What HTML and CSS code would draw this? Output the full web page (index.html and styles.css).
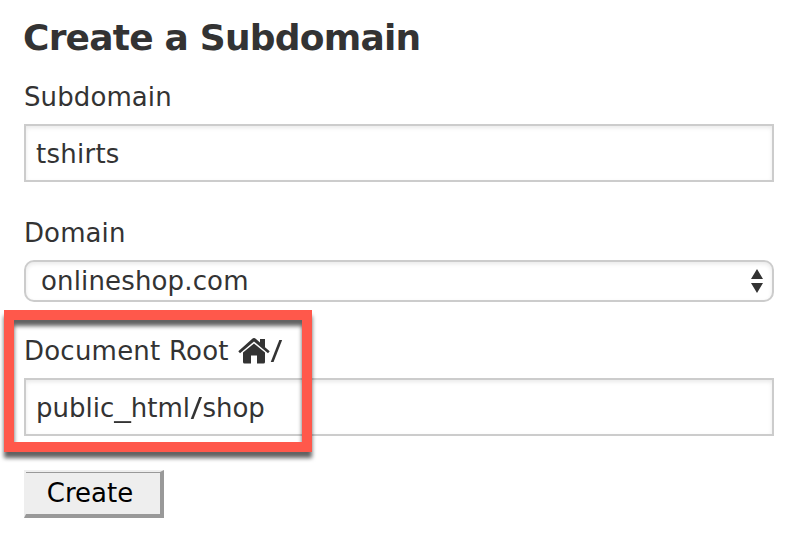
FILE: index.html
```html
<!DOCTYPE html>
<html lang="en">
<head>
<meta charset="utf-8">
<title>Create a Subdomain</title>
<link rel="stylesheet" href="styles.css">
</head>
<body>
<main class="form">
  <h1 class="title"><span>Create a Subdomain</span></h1>
  <section class="group">
    <div class="label">Subdomain</div>
    <div class="input"><span class="t-sub">tshirts</span></div>
  </section>
  <section class="group">
    <div class="label">Domain</div>
    <div class="select"><span class="t-dom">onlineshop.com</span>
      <svg class="arrows" width="14" height="26" viewBox="0 0 14 26"><path d="M7 1 13 11H1zM7 25 1 15H13z" fill="#333"/></svg>
    </div>
  </section>
  <section class="group root">
    <div class="label"><span class="t-root">Document Root</span>
      <svg class="home" width="32" height="26" viewBox="0 0 32 26" fill="#333"><path d="M16 0Q17 0 18 1L22 4.600V1H27V9.200L31.700 13.200 30 15.300 16 3.600 2 15.300 .3 13.200 14 1Q15 0 16 0Z"/><path d="M16 5.500 27 14.600V24Q27 25.500 25.500 25.500H19V17.500H13V25.500H6.500Q5 25.500 5 24V14.600Z"/></svg><span class="slash">/</span>
    </div>
    <div class="input"><span class="t-path">public<span class="wide">_</span>html<span class="wide">/</span>shop</span></div>
    <div class="highlight"></div>
  </section>
  <button class="button" type="button"><span>Create</span></button>
</main>
</body>
</html>
```
FILE: styles.css
```css
* { box-sizing: border-box; }
body {
  margin: 0;
  background: #fff;
  color: #333;
  font: 26px/32px "DejaVu Sans", Verdana, sans-serif;
}
.form { width: 774px; padding: 16px 0 0 24px; }
.title { margin: 0 0 21px -1px; font-size: 36px; line-height: 44px; font-weight: bold; white-space: nowrap; }
.title span { letter-spacing: -0.78px; }
.group { position: relative; margin-bottom: 35px; }
.group:nth-of-type(2) { margin-bottom: 33px; }
.label { display: flex; align-items: center; height: 32px; margin-bottom: 11px; letter-spacing: .1px; white-space: nowrap; }
.t-root { letter-spacing: .22px; }
.t-sub { letter-spacing: .25px; }
.t-dom { letter-spacing: .15px; }
.input {
  display: flex;
  align-items: center;
  height: 58px;
  padding: 2px 10px 0;
  border: 2px solid #ccc;
  box-shadow: inset 0 2px 4px rgba(0, 0, 0, .09);
}
.select {
  display: flex;
  align-items: center;
  justify-content: space-between;
  height: 42px;
  padding: 0 8px 0 15px;
  border: 2px solid #ccc;
  border-radius: 10px;
  box-shadow: inset 0 2px 4px rgba(0, 0, 0, .09);
}
.home { margin-left: 9px; }
.slash { display: inline-block; margin-left: 2px; transform: scaleX(1.3); }
.wide { display: inline-block; margin: 0 1.8px; transform: scaleX(1.28); }
.root { margin-bottom: 34px; }
.highlight {
  position: absolute;
  top: -25px;
  left: -20px;
  width: 308px;
  height: 142px;
  border: 10px solid #ff584b;
  filter: drop-shadow(0 6px 2px rgba(0, 0, 0, .62));
}
.button {
  display: block;
  width: 140px;
  height: 48px;
  margin: 0;
  padding: 0 6px 0 0;
  border: solid;
  border-width: 2px 4px 4px 2px;
  border-color: #eee #999 #999 #eee;
  background: #eee;
  box-shadow: inset 0 1px 0 #999;
  color: #000;
  font: inherit;
}
```
